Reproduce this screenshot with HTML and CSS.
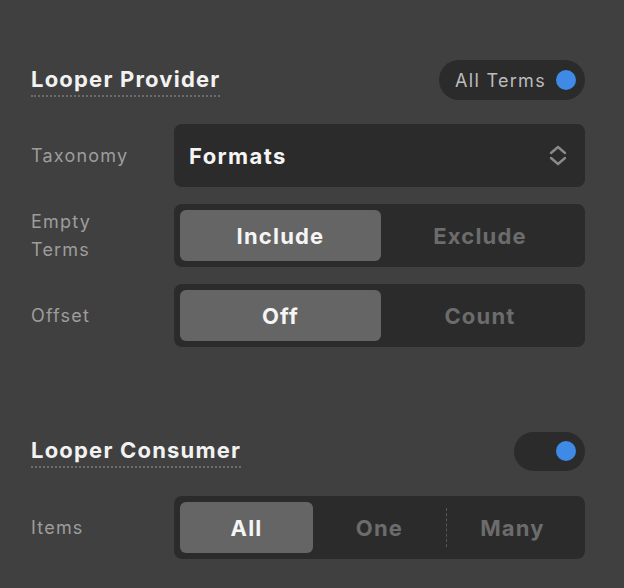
FILE: index.html
```html
<!DOCTYPE html>
<html>
<head>
<meta charset="utf-8">
<link rel="stylesheet" href="styles.css">
</head>
<body>
<div class="panel">
  <section class="section provider">
    <div class="head">
      <h2 class="title">Looper Provider</h2>
      <div class="pill">
        <span class="pill-text">All Terms</span>
        <span class="dot"></span>
      </div>
    </div>
    <div class="rows">
      <div class="row">
        <div class="label">Taxonomy</div>
        <div class="select">
          <span class="select-value">Formats</span>
          <svg class="chev" width="18" height="22" viewBox="0 0 18 22">
            <path d="M2 8 L9 2 L16 8" fill="none" stroke="#8a8a8a" stroke-width="2.4" stroke-linecap="round" stroke-linejoin="round"/>
            <path d="M2 13 L9 19 L16 13" fill="none" stroke="#8a8a8a" stroke-width="2.4" stroke-linecap="round" stroke-linejoin="round"/>
          </svg>
        </div>
      </div>
      <div class="row">
        <div class="label">Empty<br>Terms</div>
        <div class="seg">
          <div class="opt active">Include</div>
          <div class="opt">Exclude</div>
        </div>
      </div>
      <div class="row">
        <div class="label">Offset</div>
        <div class="seg">
          <div class="opt active">Off</div>
          <div class="opt">Count</div>
        </div>
      </div>
    </div>
  </section>
  <section class="section consumer">
    <div class="head">
      <h2 class="title">Looper Consumer</h2>
      <div class="toggle"><span class="dot"></span></div>
    </div>
    <div class="rows">
      <div class="row">
        <div class="label">Items</div>
        <div class="seg three">
          <div class="opt active">All</div>
          <div class="opt">One</div>
          <div class="opt divided">Many</div>
        </div>
      </div>
    </div>
  </section>
</div>
</body>
</html>
```

FILE: styles.css
```css
* { box-sizing: border-box; }
html, body { margin: 0; padding: 0; }
body {
  background: #404040;
  font-family: Inter, "Open Sans", "Liberation Sans", sans-serif;
  width: 624px;
  height: 588px;
  overflow: hidden;
}
.panel {
  padding: 60px 39px 0 31px;
  display: flex;
  flex-direction: column;
  gap: 84px;
}
.section { display: flex; flex-direction: column; gap: 24px; }
.consumer { gap: 25px; }
.head {
  display: flex;
  justify-content: space-between;
  align-items: center;
  height: 40px;
}
.title {
  margin: 0;
  font-size: 22px;
  font-weight: 700;
  color: #f2f2f2;
  letter-spacing: 1.2px;
  line-height: 26px;
  padding-bottom: 3px;
  border-bottom: 2px dotted #6c6c6c;
  align-self: flex-end;
  margin-bottom: 3px;
}
.pill {
  height: 40px;
  width: 146px;
  border-radius: 20px;
  background: #2b2b2b;
  display: flex;
  align-items: center;
  justify-content: space-between;
  padding: 0 9px 0 16px;
}
.pill-text { color: #bdbdbd; font-size: 18px; letter-spacing: 1.3px; }
.dot {
  width: 20px; height: 20px; border-radius: 50%;
  background: #3f8ae6;
  display: block;
}
.toggle {
  width: 71px; height: 39px; border-radius: 20px;
  background: #2b2b2b;
  display: flex; align-items: center; justify-content: flex-end;
  padding-right: 9px;
}
.rows { display: flex; flex-direction: column; gap: 17px; }
.row {
  display: grid;
  grid-template-columns: 143px 1fr;
  align-items: center;
  height: 63px;
}
.label {
  color: #9d9d9d;
  font-size: 18px;
  line-height: 28px;
  letter-spacing: 1.2px;
}
.select {
  height: 63px;
  background: #2b2b2b;
  border-radius: 8px;
  display: flex;
  align-items: center;
  justify-content: space-between;
  padding: 0 18px 0 15px;
}
.select-value { color: #f5f5f5; font-size: 22px; font-weight: 700; letter-spacing: 1.4px; }
.chev { display: block; }
.seg {
  height: 63px;
  background: #2b2b2b;
  border-radius: 8px;
  padding: 6px;
  display: grid;
  grid-template-columns: 201px 1fr;
}
.seg.three { grid-template-columns: 1fr 1fr 1fr; }
.opt {
  display: flex; align-items: center; justify-content: center;
  font-size: 22px; font-weight: 700;
  color: #6c6c6c;
  border-radius: 6px;
  letter-spacing: 1.2px;
  position: relative;
}
.opt.active { background: #656565; color: #f5f5f5; }
.opt.divided::before {
  content: "";
  position: absolute;
  left: 0; top: 6px; bottom: 6px;
  border-left: 1px dashed #575757;
}
```
